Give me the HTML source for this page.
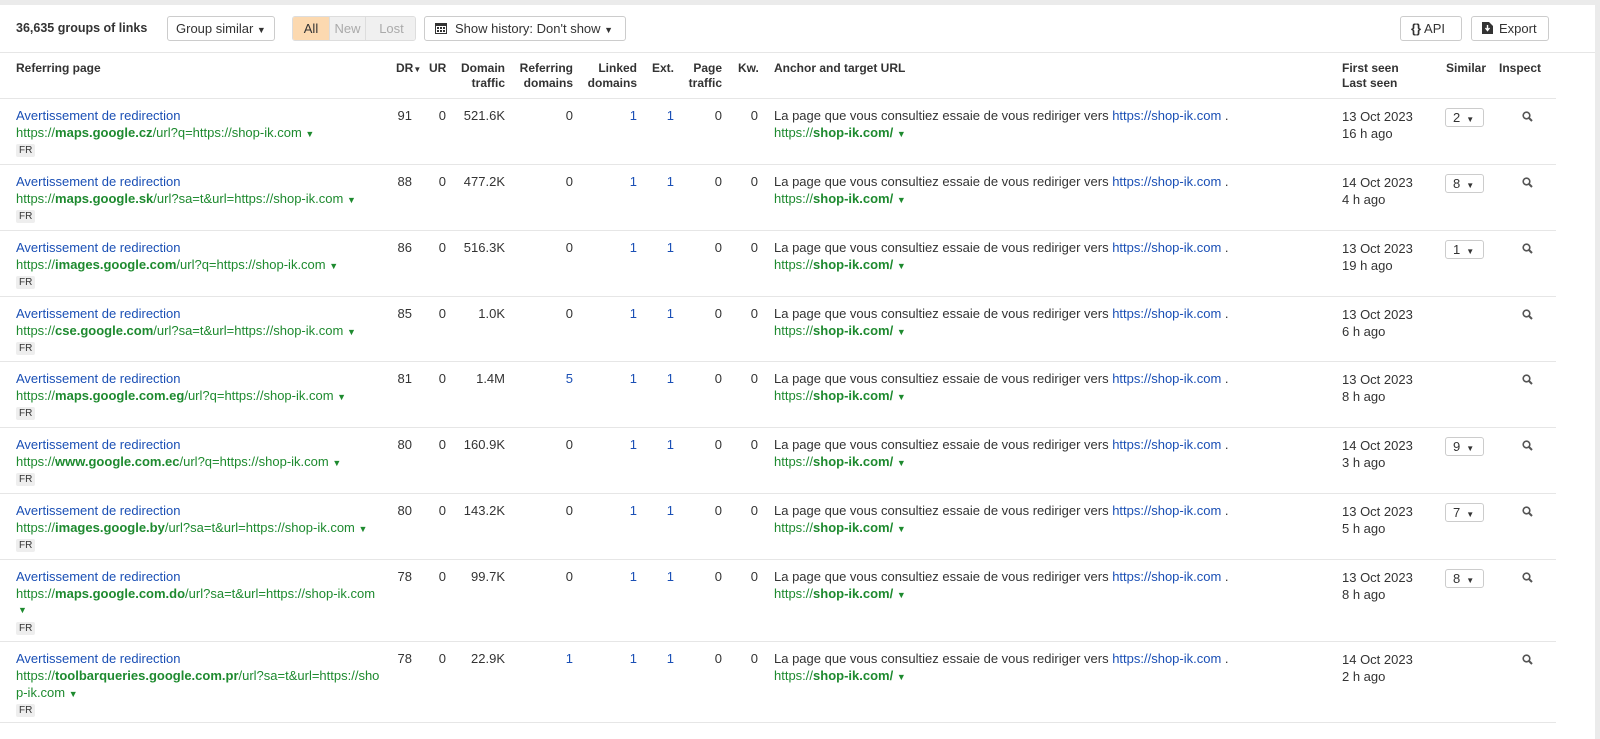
<!DOCTYPE html>
<html><head><meta charset="utf-8"><style>
*{margin:0;padding:0;box-sizing:border-box}
body{width:1600px;height:739px;background:#ebebeb;font-family:"Liberation Sans",Arial,sans-serif;font-size:13px;color:#333;position:relative;overflow:hidden}
.panel{position:absolute;left:0;top:5px;width:1595px;height:734px;background:#fff}
.a{position:absolute;white-space:nowrap}
.btn{position:absolute;border:1px solid #ccc;border-radius:3px;background:#fff;height:25px;line-height:23px;font-size:13px;color:#333;padding:0 10px}
.h{font-weight:bold;font-size:12px;color:#333;line-height:15px}
.r{text-align:right}
.row{position:absolute;left:0;width:1556px;border-top:1px solid #e6e6e6}
.blue{color:#1a4fb5}
.green{color:#1e8a2f}
.tri{font-size:9px;color:#1e8a2f}
.fr{position:absolute;left:16px;background:#eee;border-radius:2px;font-size:10px;padding:0 3px;height:13px;line-height:13px;color:#333}
.sim{position:absolute;left:1445px;width:39px;height:19px;border:1px solid #ccc;border-radius:3px;font-size:13px;line-height:17px;padding-left:7px}
.sim span{font-size:8px;margin-left:6px}
.mag{position:absolute;left:1522px}
</style></head><body>
<div class="panel"></div>
<div class="a" style="left:16px;top:21px;font-weight:bold;font-size:12.5px;color:#333">36,635 groups of links</div>
<div class="btn" style="left:167px;top:16px;padding:0 8px">Group similar <span style="font-size:9px">▼</span></div>
<div class="a" style="left:292px;top:16px;height:25px;width:124px;border:1px solid #ddd;border-radius:3px;overflow:hidden;font-size:13px;line-height:23px">
<span style="position:absolute;left:0;top:0;width:36px;height:23px;background:#fcd9b0;text-align:center;color:#333">All</span>
<span style="position:absolute;left:36px;top:0;width:36px;height:23px;background:#f0f0f0;text-align:center;color:#aaa;border-left:1px solid #ddd">New</span>
<span style="position:absolute;left:72px;top:0;width:52px;height:23px;background:#f0f0f0;text-align:center;color:#aaa;border-left:1px solid #ddd">Lost</span></div>
<div class="btn" style="left:424px;top:16px;width:202px"><svg width="12" height="12" viewBox="0 0 12 12" style="vertical-align:-1px;margin-right:8px"><rect x="0.5" y="1.5" width="11" height="10" fill="none" stroke="#333"/><rect x="0.5" y="1.5" width="11" height="2.5" fill="#333"/><g fill="#333"><rect x="2" y="5" width="2" height="2"/><rect x="5" y="5" width="2" height="2"/><rect x="8" y="5" width="2" height="2"/><rect x="2" y="8" width="2" height="2"/><rect x="5" y="8" width="2" height="2"/><rect x="8" y="8" width="2" height="2"/></g></svg>Show history: Don't show <span style="font-size:9px">▼</span></div>
<div class="btn" style="left:1400px;top:16px;width:62px"><b style="font-size:13px">{}</b> API</div>
<div class="btn" style="left:1471px;top:16px;width:78px"><svg width="11" height="12" viewBox="0 0 11 12" style="vertical-align:-1px;margin-right:6px"><path d="M0 0h7l4 4v8H0z" fill="#333"/><path d="M5.5 3v5M3.5 6l2 2.5 2-2.5" stroke="#fff" stroke-width="1.4" fill="none"/></svg>Export</div>
<div class="a" style="left:0;top:52px;width:1595px;border-top:1px solid #e6e6e6"></div>
<div class="a h" style="left:16px;top:61px">Referring page</div>
<div class="a h" style="left:396px;top:61px">DR<span style="font-size:8px">▼</span></div>
<div class="a h" style="left:429px;top:61px">UR</div>
<div class="a h r" style="left:440px;top:61px;width:65px">Domain<br>traffic</div>
<div class="a h r" style="left:505px;top:61px;width:68px">Referring<br>domains</div>
<div class="a h r" style="left:577px;top:61px;width:60px">Linked<br>domains</div>
<div class="a h" style="left:652px;top:61px">Ext.</div>
<div class="a h r" style="left:680px;top:61px;width:42px">Page<br>traffic</div>
<div class="a h" style="left:738px;top:61px">Kw.</div>
<div class="a h" style="left:774px;top:61px">Anchor and target URL</div>
<div class="a h" style="left:1342px;top:61px">First seen<br>Last seen</div>
<div class="a h" style="left:1446px;top:61px">Similar</div>
<div class="a h" style="left:1499px;top:61px">Inspect</div>

<div class="row" style="top:98px;height:66px">
<div class="a blue" style="left:16px;top:9px">Avertissement de redirection</div>
<div class="a green" style="left:16px;top:26px">https://<b>maps.google.cz</b>/url?q=https://shop-ik.com <span class="tri">▼</span></div>
<div class="fr" style="top:45px">FR</div>
<div class="a r" style="left:380px;top:9px;width:32px">91</div><div class="a r" style="left:420px;top:9px;width:26px">0</div><div class="a r" style="left:440px;top:9px;width:65px">521.6K</div><div class="a r" style="left:520px;top:9px;width:53px">0</div><div class="a r blue" style="left:600px;top:9px;width:37px">1</div><div class="a r blue" style="left:650px;top:9px;width:24px">1</div><div class="a r" style="left:700px;top:9px;width:22px">0</div><div class="a r" style="left:740px;top:9px;width:18px">0</div>
<div class="a" style="left:774px;top:9px">La page que vous consultiez essaie de vous rediriger vers <span class="blue">https://shop-ik.com</span> .</div>
<div class="a green" style="left:774px;top:26px">https://<b>shop-ik.com/</b> <span class="tri">▼</span></div>
<div class="a" style="left:1342px;top:9px;line-height:17px">13 Oct 2023<br>16 h ago</div>
<div class="sim" style="top:9px">2<span>▼</span></div>
<div class="mag" style="top:11px"><svg width="11" height="11" viewBox="0 0 11 11"><circle cx="4.5" cy="4.5" r="3.3" fill="none" stroke="#555" stroke-width="1.6"/><path d="M7 7l3 3" stroke="#555" stroke-width="2"/></svg></div>
</div>

<div class="row" style="top:164px;height:66px">
<div class="a blue" style="left:16px;top:9px">Avertissement de redirection</div>
<div class="a green" style="left:16px;top:26px">https://<b>maps.google.sk</b>/url?sa=t&amp;url=https://shop-ik.com <span class="tri">▼</span></div>
<div class="fr" style="top:45px">FR</div>
<div class="a r" style="left:380px;top:9px;width:32px">88</div><div class="a r" style="left:420px;top:9px;width:26px">0</div><div class="a r" style="left:440px;top:9px;width:65px">477.2K</div><div class="a r" style="left:520px;top:9px;width:53px">0</div><div class="a r blue" style="left:600px;top:9px;width:37px">1</div><div class="a r blue" style="left:650px;top:9px;width:24px">1</div><div class="a r" style="left:700px;top:9px;width:22px">0</div><div class="a r" style="left:740px;top:9px;width:18px">0</div>
<div class="a" style="left:774px;top:9px">La page que vous consultiez essaie de vous rediriger vers <span class="blue">https://shop-ik.com</span> .</div>
<div class="a green" style="left:774px;top:26px">https://<b>shop-ik.com/</b> <span class="tri">▼</span></div>
<div class="a" style="left:1342px;top:9px;line-height:17px">14 Oct 2023<br>4 h ago</div>
<div class="sim" style="top:9px">8<span>▼</span></div>
<div class="mag" style="top:11px"><svg width="11" height="11" viewBox="0 0 11 11"><circle cx="4.5" cy="4.5" r="3.3" fill="none" stroke="#555" stroke-width="1.6"/><path d="M7 7l3 3" stroke="#555" stroke-width="2"/></svg></div>
</div>

<div class="row" style="top:230px;height:66px">
<div class="a blue" style="left:16px;top:9px">Avertissement de redirection</div>
<div class="a green" style="left:16px;top:26px">https://<b>images.google.com</b>/url?q=https://shop-ik.com <span class="tri">▼</span></div>
<div class="fr" style="top:45px">FR</div>
<div class="a r" style="left:380px;top:9px;width:32px">86</div><div class="a r" style="left:420px;top:9px;width:26px">0</div><div class="a r" style="left:440px;top:9px;width:65px">516.3K</div><div class="a r" style="left:520px;top:9px;width:53px">0</div><div class="a r blue" style="left:600px;top:9px;width:37px">1</div><div class="a r blue" style="left:650px;top:9px;width:24px">1</div><div class="a r" style="left:700px;top:9px;width:22px">0</div><div class="a r" style="left:740px;top:9px;width:18px">0</div>
<div class="a" style="left:774px;top:9px">La page que vous consultiez essaie de vous rediriger vers <span class="blue">https://shop-ik.com</span> .</div>
<div class="a green" style="left:774px;top:26px">https://<b>shop-ik.com/</b> <span class="tri">▼</span></div>
<div class="a" style="left:1342px;top:9px;line-height:17px">13 Oct 2023<br>19 h ago</div>
<div class="sim" style="top:9px">1<span>▼</span></div>
<div class="mag" style="top:11px"><svg width="11" height="11" viewBox="0 0 11 11"><circle cx="4.5" cy="4.5" r="3.3" fill="none" stroke="#555" stroke-width="1.6"/><path d="M7 7l3 3" stroke="#555" stroke-width="2"/></svg></div>
</div>

<div class="row" style="top:296px;height:66px">
<div class="a blue" style="left:16px;top:9px">Avertissement de redirection</div>
<div class="a green" style="left:16px;top:26px">https://<b>cse.google.com</b>/url?sa=t&amp;url=https://shop-ik.com <span class="tri">▼</span></div>
<div class="fr" style="top:45px">FR</div>
<div class="a r" style="left:380px;top:9px;width:32px">85</div><div class="a r" style="left:420px;top:9px;width:26px">0</div><div class="a r" style="left:440px;top:9px;width:65px">1.0K</div><div class="a r" style="left:520px;top:9px;width:53px">0</div><div class="a r blue" style="left:600px;top:9px;width:37px">1</div><div class="a r blue" style="left:650px;top:9px;width:24px">1</div><div class="a r" style="left:700px;top:9px;width:22px">0</div><div class="a r" style="left:740px;top:9px;width:18px">0</div>
<div class="a" style="left:774px;top:9px">La page que vous consultiez essaie de vous rediriger vers <span class="blue">https://shop-ik.com</span> .</div>
<div class="a green" style="left:774px;top:26px">https://<b>shop-ik.com/</b> <span class="tri">▼</span></div>
<div class="a" style="left:1342px;top:9px;line-height:17px">13 Oct 2023<br>6 h ago</div>
<div class="mag" style="top:11px"><svg width="11" height="11" viewBox="0 0 11 11"><circle cx="4.5" cy="4.5" r="3.3" fill="none" stroke="#555" stroke-width="1.6"/><path d="M7 7l3 3" stroke="#555" stroke-width="2"/></svg></div>
</div>

<div class="row" style="top:361px;height:66px">
<div class="a blue" style="left:16px;top:9px">Avertissement de redirection</div>
<div class="a green" style="left:16px;top:26px">https://<b>maps.google.com.eg</b>/url?q=https://shop-ik.com <span class="tri">▼</span></div>
<div class="fr" style="top:45px">FR</div>
<div class="a r" style="left:380px;top:9px;width:32px">81</div><div class="a r" style="left:420px;top:9px;width:26px">0</div><div class="a r" style="left:440px;top:9px;width:65px">1.4M</div><div class="a r blue" style="left:520px;top:9px;width:53px">5</div><div class="a r blue" style="left:600px;top:9px;width:37px">1</div><div class="a r blue" style="left:650px;top:9px;width:24px">1</div><div class="a r" style="left:700px;top:9px;width:22px">0</div><div class="a r" style="left:740px;top:9px;width:18px">0</div>
<div class="a" style="left:774px;top:9px">La page que vous consultiez essaie de vous rediriger vers <span class="blue">https://shop-ik.com</span> .</div>
<div class="a green" style="left:774px;top:26px">https://<b>shop-ik.com/</b> <span class="tri">▼</span></div>
<div class="a" style="left:1342px;top:9px;line-height:17px">13 Oct 2023<br>8 h ago</div>
<div class="mag" style="top:11px"><svg width="11" height="11" viewBox="0 0 11 11"><circle cx="4.5" cy="4.5" r="3.3" fill="none" stroke="#555" stroke-width="1.6"/><path d="M7 7l3 3" stroke="#555" stroke-width="2"/></svg></div>
</div>

<div class="row" style="top:427px;height:66px">
<div class="a blue" style="left:16px;top:9px">Avertissement de redirection</div>
<div class="a green" style="left:16px;top:26px">https://<b>www.google.com.ec</b>/url?q=https://shop-ik.com <span class="tri">▼</span></div>
<div class="fr" style="top:45px">FR</div>
<div class="a r" style="left:380px;top:9px;width:32px">80</div><div class="a r" style="left:420px;top:9px;width:26px">0</div><div class="a r" style="left:440px;top:9px;width:65px">160.9K</div><div class="a r" style="left:520px;top:9px;width:53px">0</div><div class="a r blue" style="left:600px;top:9px;width:37px">1</div><div class="a r blue" style="left:650px;top:9px;width:24px">1</div><div class="a r" style="left:700px;top:9px;width:22px">0</div><div class="a r" style="left:740px;top:9px;width:18px">0</div>
<div class="a" style="left:774px;top:9px">La page que vous consultiez essaie de vous rediriger vers <span class="blue">https://shop-ik.com</span> .</div>
<div class="a green" style="left:774px;top:26px">https://<b>shop-ik.com/</b> <span class="tri">▼</span></div>
<div class="a" style="left:1342px;top:9px;line-height:17px">14 Oct 2023<br>3 h ago</div>
<div class="sim" style="top:9px">9<span>▼</span></div>
<div class="mag" style="top:11px"><svg width="11" height="11" viewBox="0 0 11 11"><circle cx="4.5" cy="4.5" r="3.3" fill="none" stroke="#555" stroke-width="1.6"/><path d="M7 7l3 3" stroke="#555" stroke-width="2"/></svg></div>
</div>

<div class="row" style="top:493px;height:66px">
<div class="a blue" style="left:16px;top:9px">Avertissement de redirection</div>
<div class="a green" style="left:16px;top:26px">https://<b>images.google.by</b>/url?sa=t&amp;url=https://shop-ik.com <span class="tri">▼</span></div>
<div class="fr" style="top:45px">FR</div>
<div class="a r" style="left:380px;top:9px;width:32px">80</div><div class="a r" style="left:420px;top:9px;width:26px">0</div><div class="a r" style="left:440px;top:9px;width:65px">143.2K</div><div class="a r" style="left:520px;top:9px;width:53px">0</div><div class="a r blue" style="left:600px;top:9px;width:37px">1</div><div class="a r blue" style="left:650px;top:9px;width:24px">1</div><div class="a r" style="left:700px;top:9px;width:22px">0</div><div class="a r" style="left:740px;top:9px;width:18px">0</div>
<div class="a" style="left:774px;top:9px">La page que vous consultiez essaie de vous rediriger vers <span class="blue">https://shop-ik.com</span> .</div>
<div class="a green" style="left:774px;top:26px">https://<b>shop-ik.com/</b> <span class="tri">▼</span></div>
<div class="a" style="left:1342px;top:9px;line-height:17px">13 Oct 2023<br>5 h ago</div>
<div class="sim" style="top:9px">7<span>▼</span></div>
<div class="mag" style="top:11px"><svg width="11" height="11" viewBox="0 0 11 11"><circle cx="4.5" cy="4.5" r="3.3" fill="none" stroke="#555" stroke-width="1.6"/><path d="M7 7l3 3" stroke="#555" stroke-width="2"/></svg></div>
</div>

<div class="row" style="top:559px;height:82px">
<div class="a blue" style="left:16px;top:9px">Avertissement de redirection</div>
<div class="a green" style="left:16px;top:26px">https://<b>maps.google.com.do</b>/url?sa=t&amp;url=https://shop-ik.com</div>
<div class="a tri" style="left:18px;top:45px">▼</div>
<div class="fr" style="top:62px">FR</div>
<div class="a r" style="left:380px;top:9px;width:32px">78</div><div class="a r" style="left:420px;top:9px;width:26px">0</div><div class="a r" style="left:440px;top:9px;width:65px">99.7K</div><div class="a r" style="left:520px;top:9px;width:53px">0</div><div class="a r blue" style="left:600px;top:9px;width:37px">1</div><div class="a r blue" style="left:650px;top:9px;width:24px">1</div><div class="a r" style="left:700px;top:9px;width:22px">0</div><div class="a r" style="left:740px;top:9px;width:18px">0</div>
<div class="a" style="left:774px;top:9px">La page que vous consultiez essaie de vous rediriger vers <span class="blue">https://shop-ik.com</span> .</div>
<div class="a green" style="left:774px;top:26px">https://<b>shop-ik.com/</b> <span class="tri">▼</span></div>
<div class="a" style="left:1342px;top:9px;line-height:17px">13 Oct 2023<br>8 h ago</div>
<div class="sim" style="top:9px">8<span>▼</span></div>
<div class="mag" style="top:11px"><svg width="11" height="11" viewBox="0 0 11 11"><circle cx="4.5" cy="4.5" r="3.3" fill="none" stroke="#555" stroke-width="1.6"/><path d="M7 7l3 3" stroke="#555" stroke-width="2"/></svg></div>
</div>

<div class="row" style="top:641px;height:82px;border-bottom:1px solid #e6e6e6">
<div class="a blue" style="left:16px;top:9px">Avertissement de redirection</div>
<div class="a green" style="left:16px;top:26px">https://<b>toolbarqueries.google.com.pr</b>/url?sa=t&amp;url=https://sho</div>
<div class="a green" style="left:16px;top:43px">p-ik.com <span class="tri">▼</span></div>
<div class="fr" style="top:62px">FR</div>
<div class="a r" style="left:380px;top:9px;width:32px">78</div><div class="a r" style="left:420px;top:9px;width:26px">0</div><div class="a r" style="left:440px;top:9px;width:65px">22.9K</div><div class="a r blue" style="left:520px;top:9px;width:53px">1</div><div class="a r blue" style="left:600px;top:9px;width:37px">1</div><div class="a r blue" style="left:650px;top:9px;width:24px">1</div><div class="a r" style="left:700px;top:9px;width:22px">0</div><div class="a r" style="left:740px;top:9px;width:18px">0</div>
<div class="a" style="left:774px;top:9px">La page que vous consultiez essaie de vous rediriger vers <span class="blue">https://shop-ik.com</span> .</div>
<div class="a green" style="left:774px;top:26px">https://<b>shop-ik.com/</b> <span class="tri">▼</span></div>
<div class="a" style="left:1342px;top:9px;line-height:17px">14 Oct 2023<br>2 h ago</div>
<div class="mag" style="top:11px"><svg width="11" height="11" viewBox="0 0 11 11"><circle cx="4.5" cy="4.5" r="3.3" fill="none" stroke="#555" stroke-width="1.6"/><path d="M7 7l3 3" stroke="#555" stroke-width="2"/></svg></div>
</div>
</body></html>
